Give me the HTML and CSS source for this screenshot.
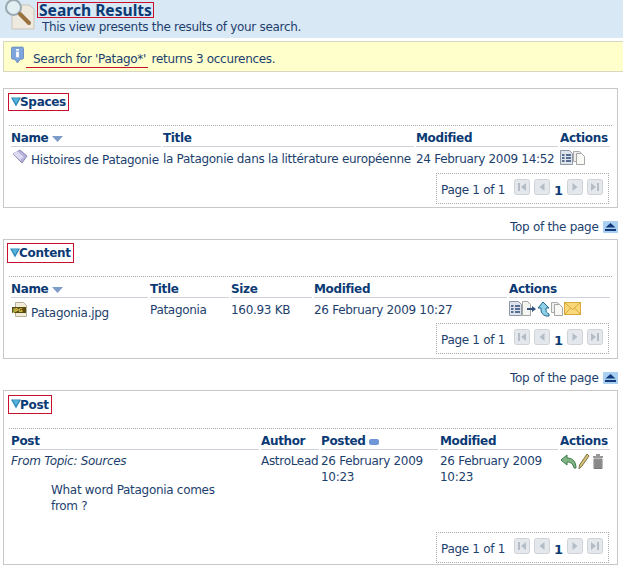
FILE: index.html
```html
<!DOCTYPE html>
<html lang="en">
<head>
<meta charset="utf-8">
<title>Search Results</title>
<link rel="stylesheet" href="styles.css">
</head>
<body>
<svg class="defs" width="0" height="0" aria-hidden="true">
  <defs>
    <symbol id="tri" viewBox="0 0 11 11"><path d="M0 1h11L5.500 11z" fill="#2a86b8"/><path d="M2 2h7L5.500 8z" fill="#55b4dc"/></symbol>
    <symbol id="props" viewBox="0 0 13 15"><path d="M.5.5h9l3 3v11H.5z" fill="#dfe3ea" stroke="#8d97a8"/><path d="M2 5h2.500M6 5h5M2 8h2.500M6 8h5M2 11h2.500M6 11h5" stroke="#2d4a7a" stroke-width="1.300"/></symbol>
    <symbol id="copy" viewBox="0 0 12 15"><path d="M.5 1.500h6l2 2v8h-8z" fill="#eee" stroke="#aaa"/><path d="M3.500 3.500h5l3 3v8h-8z" fill="#f8f8f4" stroke="#a5a5a5"/></symbol>
    <symbol id="doc" viewBox="0 0 9 15"><path d="M.5.500h5l3 3v11h-8z" fill="#f4f4f0" stroke="#a5a5a5"/></symbol>
    <symbol id="btnfirst" viewBox="0 0 16 16"><rect x=".5" y=".5" width="15" height="15" rx="2" fill="#e4e8ec" stroke="#cfd3d8"/><path d="M4 4h2v8H4zM12 4v8L7 8z" fill="#b4bcc6"/></symbol>
    <symbol id="btnprev" viewBox="0 0 16 16"><rect x=".5" y=".5" width="15" height="15" rx="2" fill="#e4e8ec" stroke="#cfd3d8"/><path d="M10.500 4v8L5.500 8z" fill="#b4bcc6"/></symbol>
    <symbol id="btnnext" viewBox="0 0 16 16"><rect x=".5" y=".5" width="15" height="15" rx="2" fill="#e4e8ec" stroke="#cfd3d8"/><path d="M5.500 4v8l5-4z" fill="#b4bcc6"/></symbol>
    <symbol id="btnlast" viewBox="0 0 16 16"><rect x=".5" y=".5" width="15" height="15" rx="2" fill="#e4e8ec" stroke="#cfd3d8"/><path d="M10 4h2v8h-2zM4 4v8l5-4z" fill="#b4bcc6"/></symbol>
    <symbol id="sort" viewBox="0 0 11 6"><path d="M0 0h11L5.500 6z" fill="#7d9cc8"/></symbol>
    <symbol id="up" viewBox="0 0 15 12"><rect width="15" height="12" rx="1" fill="#a9d0f0"/><path d="M7.500 2l5 4.500h-10z" fill="#123a7c"/><path d="M2 8h11v2H2z" fill="#123a7c"/></symbol>
  </defs>
</svg>

<header class="page-head">
  <svg class="head-icon" width="33" height="32" viewBox="0 0 33 32" aria-hidden="true">
    <path d="M8 5h17l5 4v20H8z" fill="#efeadf" stroke="#c9c4ba"/>
    <circle cx="9.500" cy="7.500" r="7.500" fill="#e2eff2" stroke="#9aaab0" stroke-width="2"/>
    <path d="M16 14l9 9" stroke="#9a7240" stroke-width="4" stroke-linecap="round"/>
  </svg>
  <div>
    <h1 class="head-title">Search Results</h1>
    <p class="head-sub">This view presents the results of your search.</p>
  </div>
</header>

<div class="notice">
  <svg class="notice-icon" width="13" height="18" viewBox="0 0 14 19" aria-hidden="true">
    <path d="M2 1h10a1.500 1.500 0 0 1 1.500 1.500v10A1.500 1.500 0 0 1 12 14H10l-3 4-3-4H2A1.500 1.500 0 0 1 .5 12.500v-10A1.500 1.500 0 0 1 2 1z" fill="#7fa6dc" stroke="#6a8cc0"/>
    <path d="M5.500 3h3v2h-3zM5.500 6h3v6h-3z" fill="#fff"/>
  </svg>
  <span class="notice-mark">Search for 'Patago*'</span>&nbsp;returns 3 occurences.
</div>

<section class="panel panel-first">
  <h2 class="panel-title"><svg class="tri"><use href="#tri"/></svg>Spaces</h2>
  <table class="grid cols-spaces">
    <thead><tr>
      <th>Name <svg class="sort"><use href="#sort"/></svg></th><th>Title</th><th>Modified</th><th>Actions</th>
    </tr></thead>
    <tbody><tr>
      <td>
        <div class="name-cell"><svg class="item-icon" width="16" height="15" viewBox="0 0 16 15" aria-hidden="true"><path d="M1 5l7-4 7 6-5 7z" fill="#b3afd8" stroke="#8f8cb8"/><path d="M1 5l4-3 7 6-4 3z" fill="#dcdaf0"/></svg><span>Histoires de Patagonie</span></div>
      </td>
      <td>la Patagonie dans la littérature européenne</td>
      <td>24 February 2009 14:52</td>
      <td class="actions"><svg class="a13"><use href="#props"/></svg><svg class="a12"><use href="#copy"/></svg></td>
    </tr></tbody>
  </table>
  <div class="pager-row">
    <div class="pager">
      <span class="pager-label">Page 1 of 1</span>
      <svg class="pbtn"><use href="#btnfirst"/></svg><svg class="pbtn"><use href="#btnprev"/></svg><b class="pnum">1</b><svg class="pbtn"><use href="#btnnext"/></svg><svg class="pbtn"><use href="#btnlast"/></svg>
    </div>
  </div>
</section>
<div class="top-link">Top of the page <svg class="up"><use href="#up"/></svg></div>

<section class="panel panel-content">
  <h2 class="panel-title"><svg class="tri"><use href="#tri"/></svg>Content</h2>
  <table class="grid cols-content">
    <thead><tr>
      <th>Name <svg class="sort"><use href="#sort"/></svg></th><th>Title</th><th>Size</th><th>Modified</th><th>Actions</th>
    </tr></thead>
    <tbody><tr>
      <td>
        <div class="name-cell"><svg class="item-icon" width="16" height="15" viewBox="0 0 16 15" aria-hidden="true"><path d="M3.500.5h8l3 3v11h-11z" fill="#f0ecd8" stroke="#b5b09a"/><rect x="0" y="5" width="14" height="6" fill="#5a4c10"/><text class="jpg-label" x="1" y="10">JPG</text></svg><span>Patagonia.jpg</span></div>
      </td>
      <td>Patagonia</td>
      <td>160.93 KB</td>
      <td>26 February 2009 10:27</td>
      <td class="actions">
        <svg class="a13"><use href="#props"/></svg><svg class="a-doc"><use href="#doc"/></svg><svg class="a-move" viewBox="0 0 24 16" aria-hidden="true"><path d="M0 7h5V5l4 3-4 3V9H0z" fill="#33507f"/><path d="M16 1l6 6h-3v2c0 2 1 3 3 4v2h-3c-3-1-5-3-5-6V7h-3z" fill="#8fd0e8" stroke="#1e6a8c"/></svg><svg class="a12"><use href="#copy"/></svg><svg class="a-mail" viewBox="0 0 17 13" aria-hidden="true"><rect x=".5" y=".5" width="16" height="12" fill="#f8d878" stroke="#d8a838"/><path d="M.5.500l8 7 8-7M.5 12.500l6-6.500M16.500 12.500l-6-6.500" fill="none" stroke="#d8a838"/></svg>
      </td>
    </tr></tbody>
  </table>
  <div class="pager-row">
    <div class="pager">
      <span class="pager-label">Page 1 of 1</span>
      <svg class="pbtn"><use href="#btnfirst"/></svg><svg class="pbtn"><use href="#btnprev"/></svg><b class="pnum">1</b><svg class="pbtn"><use href="#btnnext"/></svg><svg class="pbtn"><use href="#btnlast"/></svg>
    </div>
  </div>
</section>
<div class="top-link">Top of the page <svg class="up"><use href="#up"/></svg></div>

<section class="panel panel-post">
  <h2 class="panel-title"><svg class="tri"><use href="#tri"/></svg>Post</h2>
  <table class="grid cols-post">
    <thead><tr>
      <th>Post</th><th>Author</th><th>Posted <svg class="dot" viewBox="0 0 10 6" aria-hidden="true"><rect width="10" height="6" rx="2" fill="#6f97d8"/></svg></th><th>Modified</th><th>Actions</th>
    </tr></thead>
    <tbody><tr>
      <td>
        <em class="post-topic">From Topic: Sources</em>
        <p class="post-body">What word Patagonia comes from ?</p>
      </td>
      <td>AstroLead</td>
      <td>26 February 2009 10:23</td>
      <td>26 February 2009 10:23</td>
      <td class="actions">
        <svg class="a-reply" viewBox="0 0 17 15" aria-hidden="true"><path d="M7 1L1 6l6 5V8c3 0 6 1 7 6h2c0-6-3-10-9-10z" fill="#7fb585" stroke="#3f7a4a"/></svg><svg class="a-edit" viewBox="0 0 12 17" aria-hidden="true"><path d="M9 1l2 2-7 10-3 3 .5-4z" fill="#d8c070" stroke="#7a7350"/></svg><svg class="a-trash" viewBox="0 0 12 16" aria-hidden="true"><path d="M4 1h4v2h3v2H1V3h3z" fill="#999"/><path d="M2 6h8v9.500H2z" fill="#aaa" stroke="#777"/><path d="M4 7v8M6 7v8M8 7v8" stroke="#666"/></svg>
      </td>
    </tr></tbody>
  </table>
  <div class="pager-row">
    <div class="pager">
      <span class="pager-label">Page 1 of 1</span>
      <svg class="pbtn"><use href="#btnfirst"/></svg><svg class="pbtn"><use href="#btnprev"/></svg><b class="pnum">1</b><svg class="pbtn"><use href="#btnnext"/></svg><svg class="pbtn"><use href="#btnlast"/></svg>
    </div>
  </div>
</section>
</body>
</html>
```
FILE: styles.css
```css
html, body { margin: 0; padding: 0; }
body {
  width: 623px;
  height: 570px;
  overflow: hidden;
  background: #fff;
  color: #1d3f6e;
  font-family: "DejaVu Sans", sans-serif;
  font-size: 12px;
  line-height: 16px;
  letter-spacing: -0.3px;
}
.defs { display: block; height: 0; }

.page-head {
  display: flex;
  height: 38px;
  background: #d9e8f5;
  padding-left: 4px;
}
.head-icon { flex: none; }
.head-title {
  margin: 2px 0 0 0;
  padding: 0 1px;
  width: max-content;
  height: 14px;
  border: 1px solid #c8102e;
  box-sizing: content-box;
  font-family: "Noto Sans", sans-serif;
  font-size: 15.6px;
  line-height: 14px;
  font-weight: bold;
  color: #0b3a74;
  letter-spacing: 0;
}
.head-sub { margin: 1px 0 0 5px; }

.notice {
  display: flex;
  height: 31px;
  margin: 3px 0 0 3px;
  background: #ffffcc;
  border: 1px solid #d8d8c0;
  border-right: 0;
  box-sizing: border-box;
  padding: 4px 0 0 7px;
  line-height: 26px;
}
.notice-icon { flex: none; margin-right: 2px; }
.notice-mark { height: 21px; border-bottom: 1px solid #c8102e; padding: 0 2px 0 7px; }

.panel {
  margin: 0 5px 0 3px;
  border: 1px solid #c8c8c8;
  padding: 4px 8px 3px 7px;
  box-sizing: border-box;
}
.panel-first { margin-top: 16px; height: 120px; }
.panel-content { height: 120px; padding-top: 3px; }
.panel-post { height: 175px; }
.panel-title {
  display: flex;
  align-items: center;
  width: max-content;
  margin: 0 0 14px -3px;
  padding: 0 2px;
  height: 18px;
  box-sizing: border-box;
  border: 1px solid #c8102e;
  font-size: 12px;
  font-weight: bold;
  color: #0b3a74;
  letter-spacing: -0.3px;
}
.panel-content .panel-title { height: 20px; margin-left: -4px; margin-bottom: 13px; }
.panel-post .panel-title { height: 19px; margin-bottom: 14px; }
.tri { width: 10px; height: 11px; margin: -2px -1px 0 0; }

.grid {
  width: 603px;
  margin-left: -2px;
  table-layout: fixed;
  border-collapse: separate;
  border-spacing: 2px 0;
  border-top: 1px dotted #aaa;
}
.grid th {
  padding: 4px 0 0;
  height: 16px;
  text-align: left;
  font-size: 12px;
  font-weight: bold;
  color: #0b3a74;
  letter-spacing: -0.35px;
  border-bottom: 1px solid #cdd3d8;
  box-sizing: content-box;
}
.grid td {
  padding: 4px 0 0;
  vertical-align: top;
  height: 22px;
}
.grid td.actions { padding-top: 3px; height: 23px; }
.panel-content .grid td { height: 21px; }
.panel-content .grid td.actions { height: 22px; }
.panel-post .grid th { padding-top: 3px; height: 17px; }
.panel-post .grid td { padding-top: 3px; height: 79px; }
.panel-post .grid td.actions { height: 79px; }
.cols-spaces th:nth-child(1) { width: 150px; }
.cols-spaces th:nth-child(2) { width: 251px; }
.cols-spaces th:nth-child(3) { width: 142px; }
.cols-content th:nth-child(1) { width: 137px; }
.cols-content th:nth-child(2) { width: 79px; }
.cols-content th:nth-child(3) { width: 81px; }
.cols-content th:nth-child(4) { width: 193px; }
.cols-post th:nth-child(1) { width: 248px; }
.cols-post th:nth-child(2) { width: 58px; }
.cols-post th:nth-child(3) { width: 117px; }
.cols-post th:nth-child(4) { width: 118px; }

.name-cell { display: flex; white-space: nowrap; margin: -2px 0 0 1px; }
.panel-content .name-cell { margin-top: 0; }
.name-cell span { margin-top: 3px; margin-left: 3px; }
.item-icon { flex: none; }
.jpg-label { font-family: "DejaVu Sans", sans-serif; font-size: 5px; font-weight: bold; fill: #e8d860; letter-spacing: 0; }
.actions { white-space: nowrap; font-size: 0; }
.actions svg { vertical-align: top; }
.sort { width: 11px; height: 6px; }
.dot { width: 10px; height: 6px; }
.a13 { width: 13px; height: 15px; }
.a12 { width: 12px; height: 15px; }
.a-doc { width: 9px; height: 15px; }
.a-move { width: 24px; height: 16px; margin-left: -4px; }
.a-mail { width: 17px; height: 13px; margin: 1px 0 0 1px; }
.a-reply { width: 17px; height: 15px; margin-top: 1px; }
.a-edit { width: 12px; height: 17px; margin-left: 1px; }
.a-trash { width: 12px; height: 16px; margin-left: 2px; }

.post-topic { display: block; }
.post-body { margin: 13px 30px 0 40px; }

.pager-row { display: flex; justify-content: flex-end; }
.pager {
  display: flex;
  align-items: center;
  width: 173px;
  height: 31px;
  box-sizing: border-box;
  border: 1px dotted #aaa;
  padding-left: 4px;
}
.pager-label { margin: 3px 9px 0 0; white-space: nowrap; }
.pbtn { width: 16px; height: 16px; margin-right: 4px; margin-top: -3px; }
.pnum { font-size: 13px; color: #0b3a74; margin: 5px 4px 0 0; letter-spacing: 0; }

.top-link {
  display: flex;
  justify-content: flex-end;
  align-items: center;
  gap: 1px;
  height: 31px;
  padding-right: 5px;
  padding-top: 6px;
  box-sizing: border-box;
  white-space: pre;
}
.up { width: 15px; height: 12px; }
```
